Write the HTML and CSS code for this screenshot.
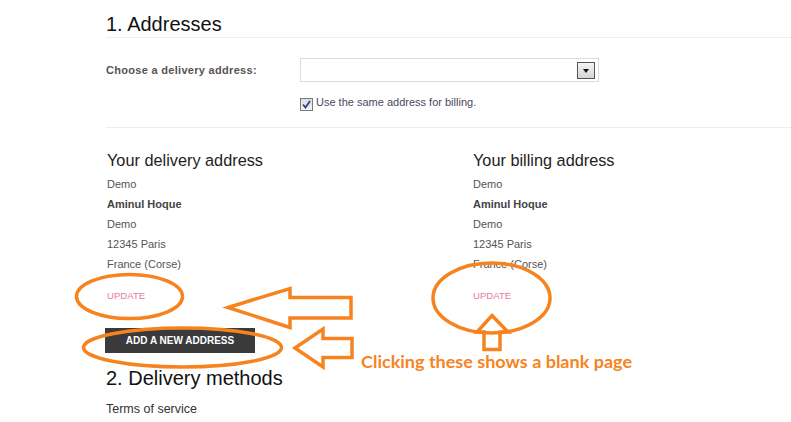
FILE: index.html
```html
<!DOCTYPE html>
<html>
<head>
<meta charset="utf-8">
<link rel="stylesheet" href="styles.css">
</head>
<body>
<div class="page">
  <h1 class="step-title first">1. Addresses</h1>
  <div class="choose-row">
    <label class="choose-label">Choose a delivery address:</label>
    <div class="select"><span class="select-btn"><span class="tri"></span></span></div>
  </div>
  <div class="check-row">
    <span class="checkbox"><svg width="9" height="9" viewBox="0 0 9 9"><path d="M1 4.5 L3.5 7.5 L8 1" fill="none" stroke="#2b3f8f" stroke-width="1.8"/></svg></span>
    <span class="check-text">Use the same address for billing.</span>
  </div>
  <div class="addresses">
    <div class="address">
      <h3 class="address-title">Your delivery address</h3>
      <ul class="address-lines">
        <li>Demo</li>
        <li class="name">Aminul Hoque</li>
        <li>Demo</li>
        <li>12345 Paris</li>
        <li>France (Corse)</li>
      </ul>
      <a class="update">UPDATE</a>
    </div>
    <div class="address">
      <h3 class="address-title">Your billing address</h3>
      <ul class="address-lines">
        <li>Demo</li>
        <li class="name">Aminul Hoque</li>
        <li>Demo</li>
        <li>12345 Paris</li>
        <li>France (Corse)</li>
      </ul>
      <a class="update">UPDATE</a>
    </div>
  </div>
  <a class="add-btn">ADD A NEW ADDRESS</a>
  <h1 class="step-title second">2. Delivery methods</h1>
  <p class="terms">Terms of service</p>
</div>
<svg class="annot" width="791" height="422" viewBox="0 0 791 422">
  <g fill="none" stroke="#f7831f" stroke-width="3.5" stroke-linejoin="miter">
    <ellipse cx="129.5" cy="296.5" rx="53" ry="22"/>
    <ellipse cx="182.5" cy="347.5" rx="99" ry="19.5"/>
    <ellipse cx="491.5" cy="298" rx="58.5" ry="35"/>
    <polygon points="228,307.5 290,288.5 290,297.5 351,297.5 351,318 290,318 290,327.5"/>
    <polygon points="295,348 323,329 323,338.5 352,338.5 352,357.5 323,357.5 323,367"/>
    <polygon points="492,315.5 508,332 500,332 500,349.5 484,349.5 484,332 477,332"/>
  </g>
  <text class="annot-text" x="361" y="367.5" textLength="271" lengthAdjust="spacingAndGlyphs">Clicking these shows a blank page</text>
</svg>
</body>
</html>
```

FILE: styles.css
```css
html, body {
  margin: 0;
  padding: 0;
  background: #fff;
}
body {
  font-family: "Liberation Sans", Arial, sans-serif;
  color: #555;
  width: 791px;
  height: 422px;
  overflow: hidden;
  position: relative;
}
.page {
  padding-left: 106px;
}
.step-title {
  font-weight: normal;
  font-size: 20px;
  line-height: 24px;
  color: #111;
  margin: 0;
}
.step-title.first {
  margin-top: 12px;
  padding-bottom: 1px;
  border-bottom: 1px solid #eeeeee;
}
.choose-row {
  display: flex;
  align-items: center;
  margin-top: 20px;
  height: 24px;
}
.choose-label {
  width: 194px;
  font-size: 11px;
  font-weight: bold;
  letter-spacing: 0.3px;
  color: #555;
  line-height: 24px;
}
.select {
  box-sizing: border-box;
  width: 299px;
  height: 24px;
  border: 1px solid #dcdcdc;
  display: flex;
  justify-content: flex-end;
  align-items: center;
  padding-right: 3px;
}
.select-btn {
  box-sizing: border-box;
  width: 18px;
  height: 17px;
  border: 1px solid #555;
  background: linear-gradient(#f4f4f4, #d6d6d6);
  display: flex;
  align-items: center;
  justify-content: center;
}
.tri {
  width: 0;
  height: 0;
  border-left: 3.5px solid transparent;
  border-right: 3.5px solid transparent;
  border-top: 4px solid #111;
  margin-top: 1px;
}
.check-row {
  display: flex;
  align-items: flex-start;
  margin-top: 14px;
  height: 31px;
  border-bottom: 1px solid #eeeeee;
  padding-left: 194px;
}
.checkbox {
  width: 11px;
  height: 11px;
  border: 1px solid #7a7a7a;
  background: linear-gradient(#dcdcdc, #f4f4f4);
  display: flex;
  align-items: center;
  justify-content: center;
  margin-top: 2px;
  margin-right: 3px;
}
.check-text {
  font-size: 11px;
  line-height: 13px;
  color: #4a4a5c;
}
.addresses {
  display: grid;
  grid-template-columns: 366px 300px;
  margin-top: 22px;
  padding-left: 1px;
}
.address-title {
  font-weight: normal;
  font-size: 16.3px;
  line-height: 20px;
  color: #222;
  margin: 0 0 4px 0;
}
.address-lines {
  list-style: none;
  margin: 0;
  padding: 0;
  font-size: 11px;
  line-height: 20px;
  color: #555;
}
.address-lines .name {
  font-weight: bold;
  color: #444;
}
.update {
  display: block;
  margin-top: 12px;
  font-size: 9.6px;
  line-height: 20px;
  color: #e8799f;
}
.add-btn {
  display: inline-flex;
  align-items: center;
  justify-content: center;
  margin-top: 22px;
  margin-left: -1px;
  width: 150px;
  height: 25px;
  background: #3a3a3a;
  color: #fff;
  font-size: 10px;
  font-weight: bold;
}
.step-title.second {
  margin-top: 13px;
}
.terms {
  margin: 10px 0 0 0;
  font-size: 12.5px;
  line-height: 18px;
  color: #333;
}
.annot {
  position: absolute;
  left: 0;
  top: 0;
  pointer-events: none;
}
.annot-text {
  font-family: "Lato", "Noto Sans", sans-serif;
  font-weight: bold;
  font-size: 17px;
  fill: #f7831f;
}
```
